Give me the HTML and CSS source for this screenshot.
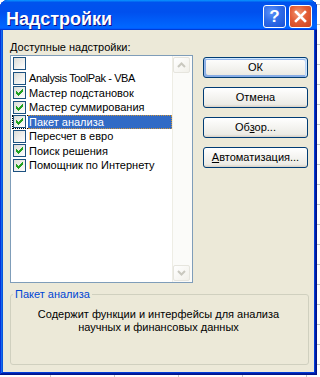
FILE: index.html
```html
<!DOCTYPE html>
<html lang="ru">
<head>
<meta charset="utf-8">
<title>Надстройки</title>
<link rel="stylesheet" href="styles.css">
</head>
<body>
<div class="window">
  <div class="titlebar">
    <span class="title">Надстройки</span>
    <div class="caption-buttons">
      <span class="cap-btn help">?</span>
      <span class="cap-btn close"><svg width="21" height="21" viewBox="0 0 21 21"><path d="M6 6 L15 15 M15 6 L6 15" stroke="#fff" stroke-width="2.6" stroke-linecap="square" fill="none"/></svg></span>
    </div>
  </div>
  <div class="client">
    <div class="main">
      <div class="left">
        <div class="label"><u>Д</u>оступные надстройки:</div>
        <div class="listbox">
          <div class="items">
            <div class="row"><span class="cb-cell"><span class="checkbox"></span></span><span class="text"></span></div>
            <div class="row"><span class="cb-cell"><span class="checkbox"></span></span><span class="text latin">Analysis ToolPak - VBA</span></div>
            <div class="row"><span class="cb-cell"><span class="checkbox"><svg class="check" width="7" height="7" viewBox="0 0 7 7"><path d="M6 0h1v1h-1z M5 1h2v1h-2z M0 2h1v1h-1z M4 2h3v1h-3z M0 3h2v1h-2z M3 3h3v1h-3z M0 4h5v1h-5z M1 5h3v1h-3z M2 6h1v1h-1z"/></svg></span></span><span class="text">Мастер подстановок</span></div>
            <div class="row"><span class="cb-cell"><span class="checkbox"><svg class="check" width="7" height="7" viewBox="0 0 7 7"><path d="M6 0h1v1h-1z M5 1h2v1h-2z M0 2h1v1h-1z M4 2h3v1h-3z M0 3h2v1h-2z M3 3h3v1h-3z M0 4h5v1h-5z M1 5h3v1h-3z M2 6h1v1h-1z"/></svg></span></span><span class="text">Мастер суммирования</span></div>
            <div class="row selected"><span class="cb-cell"><span class="checkbox"><svg class="check" width="7" height="7" viewBox="0 0 7 7"><path d="M6 0h1v1h-1z M5 1h2v1h-2z M0 2h1v1h-1z M4 2h3v1h-3z M0 3h2v1h-2z M3 3h3v1h-3z M0 4h5v1h-5z M1 5h3v1h-3z M2 6h1v1h-1z"/></svg></span></span><span class="text">Пакет анализа</span></div>
            <div class="row"><span class="cb-cell"><span class="checkbox"></span></span><span class="text">Пересчет в евро</span></div>
            <div class="row"><span class="cb-cell"><span class="checkbox"><svg class="check" width="7" height="7" viewBox="0 0 7 7"><path d="M6 0h1v1h-1z M5 1h2v1h-2z M0 2h1v1h-1z M4 2h3v1h-3z M0 3h2v1h-2z M3 3h3v1h-3z M0 4h5v1h-5z M1 5h3v1h-3z M2 6h1v1h-1z"/></svg></span></span><span class="text">Поиск решения</span></div>
            <div class="row"><span class="cb-cell"><span class="checkbox"><svg class="check" width="7" height="7" viewBox="0 0 7 7"><path d="M6 0h1v1h-1z M5 1h2v1h-2z M0 2h1v1h-1z M4 2h3v1h-3z M0 3h2v1h-2z M3 3h3v1h-3z M0 4h5v1h-5z M1 5h3v1h-3z M2 6h1v1h-1z"/></svg></span></span><span class="text">Помощник по Интернету</span></div>
          </div>
          <div class="scrollbar">
            <span class="sb-btn"><svg width="9" height="6" viewBox="0 0 9 6"><path d="M1 5 L4.5 1.5 L8 5" fill="none" stroke="#c9c8bf" stroke-width="2"/></svg></span>
            <span class="sb-btn"><svg width="9" height="6" viewBox="0 0 9 6"><path d="M1 1 L4.5 4.5 L8 1" fill="none" stroke="#c9c8bf" stroke-width="2"/></svg></span>
          </div>
        </div>
      </div>
      <div class="buttons">
        <button class="btn default">ОК</button>
        <button class="btn">Отмена</button>
        <button class="btn">Об<u>з</u>ор...</button>
        <button class="btn"><u>А</u>втоматизация...</button>
      </div>
    </div>
    <fieldset class="group">
      <legend>Пакет анализа</legend>
      <p class="desc">Содержит функции и интерфейсы для анализа научных и финансовых данных</p>
    </fieldset>
  </div>
</div>
</body>
</html>
```
FILE: styles.css
```css
* { box-sizing: border-box; }
html, body { margin: 0; padding: 0; }
body {
  width: 320px;
  height: 377px;
  overflow: hidden;
  background-color: #fff;
  background-image:
    linear-gradient(to right, #c6c6c6 1px, transparent 1px),
    linear-gradient(to bottom, #c6c6c6 1px, transparent 1px);
  background-size: 64px 100%, 100% 20px;
  background-position: 50px 0, 0 4px;
  font-family: "Liberation Sans", Arial, sans-serif;
  font-size: 11px;
  color: #000;
}
.window {
  width: 317px;
  height: 375px;
  display: flex;
  flex-direction: column;
  background: #0831d9;
  border-radius: 8px 8px 0 0;
  overflow: hidden;
  box-shadow: inset -1px -1px #00138c, inset 1px 1px #0831d9, inset -2px -2px #001ea0,
    inset 2px 2px #166aee, inset -3px -3px #003bda, inset 3px 3px #0855dd;
}
.titlebar {
  height: 30px;
  flex: none;
  display: flex;
  align-items: flex-start;
  justify-content: space-between;
  padding: 0 5px 0 6px;
  background: linear-gradient(180deg, #0997ff, #0053ee 8%, #0050ee 40%, #06f 88%, #06f 93%, #005bff 95%, #003dd7 96%, #003dd7);
}
.title {
  margin-top: 9px;
  font: bold 18px/20px "Liberation Sans", Arial, sans-serif;
  color: #fff;
  text-shadow: 1px 1px #0f1089;
}
.caption-buttons {
  display: flex;
  gap: 3px;
  margin-top: 5px;
}
.cap-btn {
  width: 23px;
  height: 23px;
  border: 1px solid #fff;
  border-radius: 3px;
  display: flex;
  align-items: center;
  justify-content: center;
}
.help {
  background: radial-gradient(circle at 35% 30%, #5f93f8 0, #2f6ce9 45%, #1c52d4 100%);
  color: #fff;
  font: bold 17px/1 "Liberation Sans", Arial, sans-serif;
}
.close {
  background: radial-gradient(circle at 40% 35%, #f39a74 0, #e35d36 45%, #cc4520 100%);
}
.client {
  flex: 1;
  margin: 0 3px 3px;
  background: #ece9d8;
  display: flex;
  flex-direction: column;
  padding: 11px 5px 7px 7px;
}
.main {
  display: flex;
  gap: 10px;
}
.left { width: 183px; }
.label {
  height: 13px;
  line-height: 13px;
}
.listbox {
  margin-top: 1px;
  height: 228px;
  border: 1px solid #7f9db9;
  background: #fff;
  display: flex;
}
.items {
  flex: 1;
  padding: 0.5px 0 0 1px;
}
.row {
  height: 14.5px;
  display: flex;
}
.cb-cell {
  width: 16px;
  flex: none;
  display: flex;
  align-items: center;
  border: 1px dotted transparent;
  border-right: 0;
}
.checkbox {
  width: 13px;
  height: 13px;
  flex: none;
  border: 1px solid #1c5180;
  background: linear-gradient(135deg, #dcdcd7, #fff);
  display: flex;
  align-items: center;
  justify-content: center;
}
.check { fill: #21a121; display: block; }
.text {
  flex: 1;
  border: 1px dotted transparent;
  border-left: 0;
  line-height: 12.5px;
  padding-left: 1px;
  white-space: nowrap;
}
.latin { letter-spacing: -0.4px; }
.row.selected .cb-cell { border-color: #000; }
.row.selected .text {
  background: #316ac5;
  color: #fff;
  border-color: #ce953a;
}
.scrollbar {
  width: 20px;
  flex: none;
  border-left: 1px solid #eeede5;
  background: #fbfbf9;
  display: flex;
  flex-direction: column;
  justify-content: space-between;
  padding: 1px 2px 1px 0;
}
.sb-btn {
  width: 17px;
  height: 16px;
  border: 1px solid #e6e5de;
  border-radius: 2px;
  background: linear-gradient(135deg, #fff, #f1f0ea);
  display: flex;
  align-items: center;
  justify-content: center;
}
.buttons {
  width: 105px;
  display: flex;
  flex-direction: column;
  gap: 9px;
  padding-top: 16px;
}
.btn {
  width: 105px;
  height: 21px;
  padding: 0;
  font: 11px/1 "Liberation Sans", Arial, sans-serif;
  color: #000;
  border: 1px solid #003c74;
  border-radius: 3px;
  background: linear-gradient(180deg, #fff, #ecebe5 86%, #d8d0c4);
}
.btn.default {
  box-shadow: inset -1px 1px #cee7ff, inset 1px 2px #98b8ea, inset -2px 2px #bcd4f6,
    inset 1px -1px #89ade4, inset 2px -2px #89ade4;
}
.group {
  margin: 5px 0 0;
  padding: 0;
  width: 299px;
  min-width: 0;
  flex: 1;
  border: 1px solid #d0d0bf;
  border-radius: 3px;
}
.group legend {
  color: #0046d5;
  padding: 0 2px;
  margin-left: 2px;
  line-height: 13px;
}
.desc {
  margin: 7px 0 0;
  padding: 0 21px 0 19px;
  text-align: center;
  line-height: 13px;
}
```
